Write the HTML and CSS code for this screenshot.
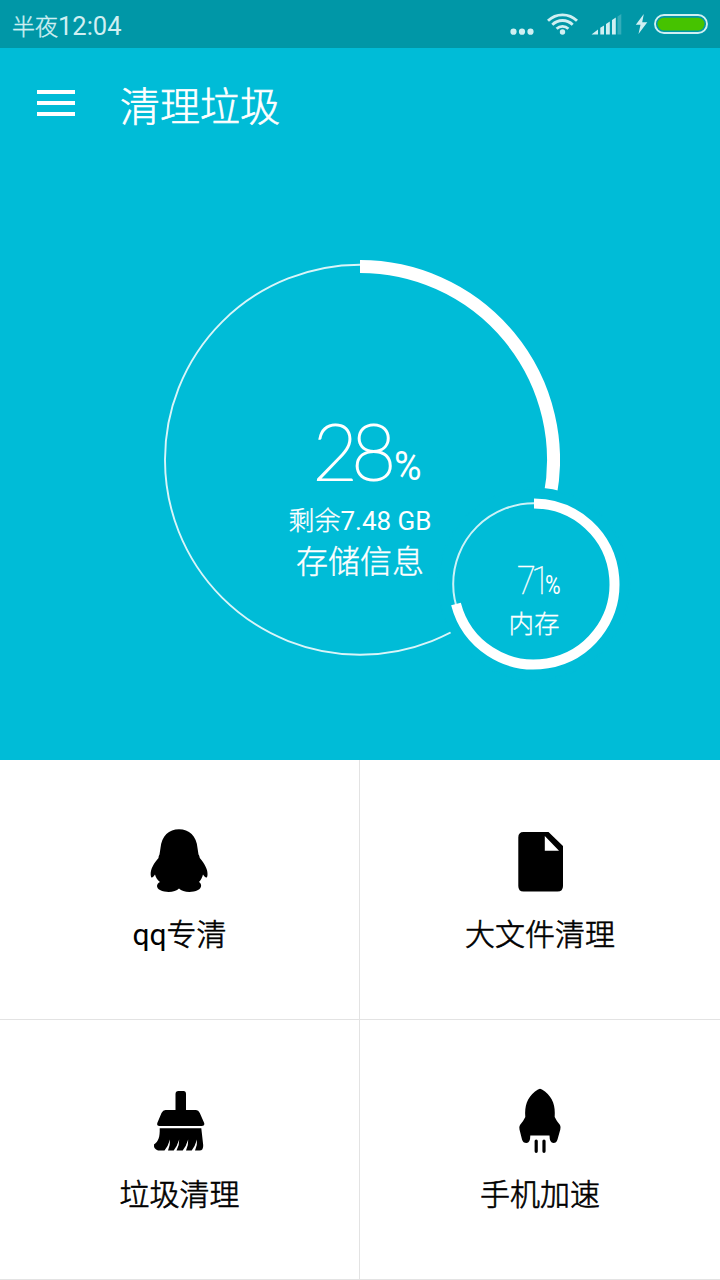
FILE: index.html
```html
<!DOCTYPE html>
<html lang="zh-CN">
<head>
<meta charset="utf-8">
<title>清理垃圾</title>
<link rel="stylesheet" href="styles.css">
</head>
<body>
<header class="status">
  <span class="status-time">半夜<span class="clock">12:04</span></span>
  <svg class="status-icons" width="220" height="48" viewBox="0 0 220 48">
    <g fill="#d0eff2">
      <circle cx="13.5" cy="31.7" r="3.1"/><circle cx="22" cy="31.7" r="3.1"/><circle cx="30.5" cy="31.7" r="3.1"/>
      <circle cx="62.5" cy="32" r="2.7"/>
      <path d="M91.500 34.500L98 29.500V34.500zM100.300 27.800L104 25.500V34.500H100.300zM106 24L109.800 21.500V34.500H106zM112 20L115.800 17.500V34.500H112z"/>
      <path opacity=".25" d="M117.500 16.500L121.300 14V34.500H117.500z"/>
      <path d="M143.800 14L135.800 24.700H140.500L138.500 34L147.300 22.200H142.200z"/>
    </g>
    <g fill="none" stroke="#d0eff2" stroke-width="2.8">
      <path d="M48 20.800A20.500 20.500 0 0 1 77 20.800M52.300 24.700A14.500 14.500 0 0 1 72.700 24.700M56.600 28.700A8.500 8.500 0 0 1 68.400 28.700"/>
    </g>
    <rect x="155" y="15" width="52" height="18" rx="9" fill="none" stroke="#d0eff2" stroke-width="1.9"/>
    <rect x="157.500" y="17.700" width="47" height="12.700" rx="6.300" fill="#46c300"/>
  </svg>
</header>
<main>
  <section class="hero">
    <div class="appbar">
      <svg class="menu" width="38" height="26" viewBox="0 0 38 26"><path d="M0 2H38M0 13H38M0 24H38" stroke="#fff" stroke-width="4"/></svg>
      <h1 class="title">清理垃圾</h1>
    </div>
    <div class="gauge">
      <svg class="ring" width="400" height="400" viewBox="0 0 400 400" fill="none" stroke="#fff">
        <circle cx="200" cy="199.700" r="195" stroke-width="1.9" stroke-opacity=".85"/>
        <path d="M200 6.500A193.500 193.500 0 0 1 390.100 236.300" stroke-width="13"/>
      </svg>
      <div class="value"><span class="num">28</span><span class="pct">%</span></div>
      <div class="free">剩余<span class="latin">7.48 GB</span></div>
      <div class="name">存储信息</div>
      <div class="memory">
        <svg class="ring" width="190" height="190" viewBox="0 0 190 190" fill="none" stroke="#fff">
          <circle cx="95" cy="95" r="80.800" stroke-width="2" stroke-opacity=".8"/>
          <path d="M95 14.500A80.500 80.500 0 1 1 17 115" stroke-width="10"/>
        </svg>
        <div class="value small"><span class="num">71</span><span class="pct">%</span></div>
        <div class="memory-name">内存</div>
      </div>
    </div>
  </section>
  <nav class="grid">
    <a class="tile">
      <svg class="icon" width="80" height="80" viewBox="0 0 80 80"><path d="M39 6.300C49 6.300 56.500 13 57.500 25L58.500 31.500C59.300 32.500 59.600 34 59.800 35C65 41 68 47 67.500 52C67.300 55.500 65.500 55.500 63 51.500C62.200 54.500 60.800 57 59 59C62 61 62 65 58 67C51 70.500 42.500 69 39 65.500C35.500 69 27 70.500 20 67C16 65 16 61 20 59C17.500 57 15.800 54.500 15 51.500C12.500 55.500 11 55.500 10.700 52C10.300 46 14 40 18.500 35C18.500 33.500 19 32.500 19.500 31.500L20.500 25C21.500 13 29 6.300 39 6.300Z"/></svg>
      <span class="label"><span class="latin">qq</span>专清</span>
    </a>
    <a class="tile">
      <svg class="icon" width="80" height="80" viewBox="0 0 80 80"><path fill-rule="evenodd" d="M23.500 9H48.500L63 23V63Q63 68.500 57.500 68.500H23.500Q18.300 68.500 18.300 63V14.500Q18.300 9 23.500 9ZM44.800 13V27.700H59Z"/></svg>
      <span class="label">大文件清理</span>
    </a>
    <a class="tile">
      <svg class="icon" width="80" height="80" viewBox="0 0 80 80"><path d="M35.500 27V11Q35.500 8 38.500 8H43.500Q46 8 46 11V27H56Q58.500 27 59.800 30L64.200 40Q65 43 61.500 43H19.500Q16.500 43 17.300 40L21.500 30Q23 27 25.500 27ZM19.700 45.300H61.300L63.200 62Q63.500 67.500 59.500 67.500H55Q57.500 62 57 56.500Q55.200 63 51.700 67.500H46Q48.500 62 48.200 56.500Q46.200 63 42.700 67.500H36.500Q39.500 62 39.200 56.500Q37.200 63 33.700 67.500H28Q30.300 62 30 56.500Q28.200 63 24.500 67.500H18Q13.500 66 14 61.500C18.500 58.500 20 54 19.700 45.300Z"/></svg>
      <span class="label">垃圾清理</span>
    </a>
    <a class="tile">
      <svg class="icon" width="80" height="80" viewBox="0 0 80 80"><path d="M40 5.800Q41.500 5.800 45 8.500C53 15 55.500 23 54.700 34Q56.500 38 60 42Q61 44 60.300 46.500L57.500 56.500Q56.500 60 53.500 60Q49.500 60 49.500 52.500H30.300Q30.300 60 26.500 60Q23 60 22 56.500L19.500 46.500Q18.800 44 20 42Q23.500 38 25.300 34C24.500 23 27 15 35 8.500Q38.500 5.800 40 5.800Z"/><path d="M36.200 58V68.300M44 58V68.300" stroke="#000" stroke-width="3.200" stroke-linecap="round"/></svg>
      <span class="label">手机加速</span>
    </a>
  </nav>
</main>
</body>
</html>
```
FILE: styles.css
```css
* { box-sizing: border-box; }
body {
  margin: 0;
  width: 720px;
  font-family: Roboto, "Noto Sans CJK SC", sans-serif;
  background: #fff;
}
.status {
  display: flex;
  justify-content: space-between;
  height: 48px;
  padding-left: 12px;
  background: #0097a7;
  color: #d0eff2;
}
.status-time { font: 300 23px/50px "Noto Sans CJK SC", sans-serif; -webkit-text-stroke: 0.4px; }
.clock { font-family: Roboto, sans-serif; font-size: 25.500px; font-weight: 400; -webkit-text-stroke: 0; }
.latin { font-weight: 400; -webkit-text-stroke: 0; }
.hero {
  height: 712px;
  background: #00bcd7;
  color: #fff;
}
.appbar {
  display: flex;
  align-items: center;
  gap: 45px;
  height: 112px;
  padding-left: 37px;
}
.menu { margin-bottom: 2px; }
.title { margin: 8px 0 0; font-size: 40px; font-weight: 300; line-height: 56px; -webkit-text-stroke: 0.6px; }
.gauge {
  position: relative;
  display: flex;
  flex-direction: column;
  align-items: center;
  width: 400px;
  height: 400px;
  margin: 100px auto 0;
  padding-top: 150px;
}
.ring { position: absolute; inset: 0; }
.value { display: flex; align-items: baseline; line-height: 80px; height: 91px; margin-left: 15px; }
.num { font-family: Lato, sans-serif; font-size: 79px; font-weight: 100; letter-spacing: -6.500px; -webkit-text-stroke: 2px; transform: scaleX(.98); }
.pct { font-size: 40px; font-weight: 400; margin-left: 3px; transform: scaleX(.94); transform-origin: left; }
.free { font-size: 26px; line-height: 40px; white-space: nowrap; font-weight: 300; -webkit-text-stroke: 0.3px; }
.name { margin-top: 1px; font-size: 32px; line-height: 40px; font-weight: 300; -webkit-text-stroke: 0.4px; }
.memory {
  position: absolute;
  left: 279px;
  top: 229px;
  display: flex;
  flex-direction: column;
  align-items: center;
  width: 190px;
  height: 190px;
  padding-top: 72px;
  border-radius: 50%;
  background: #00bcd7;
  box-shadow: 0 0 0 1.500px #00bcd7;
}
.small { height: 43px; line-height: 40px; margin-left: 9px; }
.small .num { font-family: Roboto, sans-serif; font-size: 39px; letter-spacing: -5px; -webkit-text-stroke: 0.4px; transform: scaleX(.88); transform-origin: right; }
.small .pct { font-size: 25px; margin-left: -1px; transform: scaleX(.85); }
.memory-name { font-size: 25.500px; line-height: 40px; font-weight: 300; -webkit-text-stroke: 0.3px; }
.grid {
  display: grid;
  grid-template-columns: 360px 360px;
  grid-auto-rows: 260px;
}
.tile {
  display: flex;
  flex-direction: column;
  align-items: center;
  padding-top: 63px;
  border-bottom: 1px solid #e3e3e3;
  color: #000;
}
.tile:nth-child(odd) { border-right: 1px solid #e3e3e3; }
.icon { display: block; }
.label { margin-top: 12px; font-size: 30px; line-height: 40px; font-weight: 300; -webkit-text-stroke: 0.6px; }
```
